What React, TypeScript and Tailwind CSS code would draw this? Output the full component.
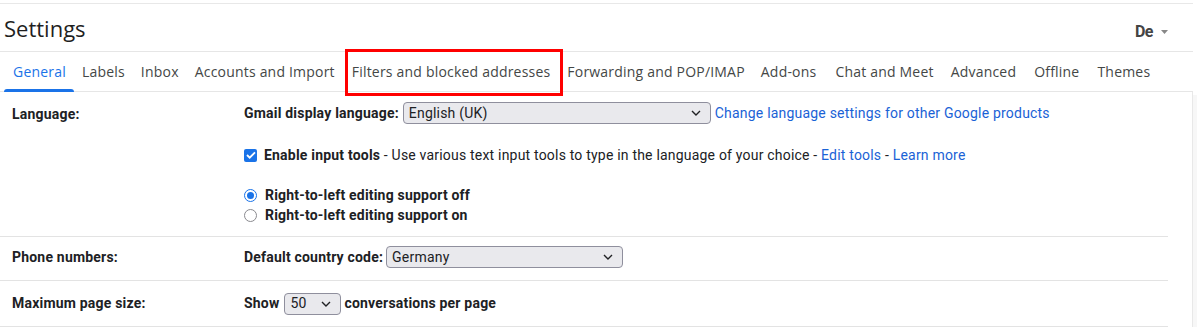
import React from "react";

const tabs: { t: string; m: string }[] = [
  { t: "General", m: "" },
  { t: "Labels", m: "" },
  { t: "Inbox", m: "" },
  { t: "Accounts and Import", m: "mr-[1px]" },
  { t: "Filters and blocked addresses", m: "mr-[1px]" },
  { t: "Forwarding and POP/IMAP", m: "" },
  { t: "Add-ons", m: "mr-[3px]" },
  { t: "Chat and Meet", m: "mr-[1px]" },
  { t: "Advanced", m: "mr-[2px]" },
  { t: "Offline", m: "mr-[2px]" },
  { t: "Themes", m: "" },
];

function Chevron() {
  return (
    <svg width="10" height="6" viewBox="0 0 10 6" className="shrink-0">
      <path d="M1 1l4 4 4-4" fill="none" stroke="#202124" strokeWidth="1.4" />
    </svg>
  );
}

function Select({ value, width }: { value: string; width: string }) {
  return (
    <div
      className={`${width} h-[22px] flex items-center justify-between pl-[5px] pr-[9px] bg-[#e9e9ed] border border-[#8f8f9d] rounded-[4px] text-[14px] font-normal text-[#202124]`}
    >
      <span>{value}</span>
      <Chevron />
    </div>
  );
}

export default function App() {
  return (
    <div
      className="w-[1197px] h-[333px] bg-white overflow-hidden text-[#202124]"
      style={{ fontFamily: "Roboto, 'Liberation Sans', sans-serif" }}
    >
      <div className="h-[3px]" />
      <div className="flex">
        <div className="w-[1193px]">
          <div className="border-t border-[#e8e8e8] h-[48px] flex items-center justify-between pl-[4px] pr-[25px]">
            <span
              className="text-[22px] text-[#1f1f1f] pt-[2px]"
              style={{ fontFamily: "'Open Sans', Roboto, sans-serif" }}
            >
              Settings
            </span>
            <span className="flex items-center gap-[8px] text-[16px] font-bold text-[#444] pt-[8px]">
              <span className="tracking-[-0.5px]">De</span>
              <svg width="7" height="4" viewBox="0 0 7 4">
                <path d="M0 0h7L3.5 4z" fill="#888" />
              </svg>
            </span>
          </div>
          <div className="border-t border-b border-[#e6e6e6] h-[41px] flex items-stretch pl-[5px]">
            {tabs.map(({ t, m }, i) => (
              <div
                key={t}
                className={`relative px-[8px] flex items-center text-[14px] ${m} ${
                  i === 0 ? "text-[#1a73e8]" : "text-[#444746]"
                }`}
                style={{ fontFamily: "'Open Sans', Roboto, sans-serif", letterSpacing: "0.2px" }}
              >
                {t}
                {i === 0 && (
                  <div className="absolute left-[-1px] right-0 bottom-[-1px] h-[3px] bg-[#1a73e8] rounded-t-[3px]" />
                )}
                {i === 4 && (
                  <div className="absolute left-[1px] right-[-5px] top-[-3px] bottom-[-5px] border-[3px] border-[#ff0000]" />
                )}
              </div>
            ))}
          </div>
          <div
            className="border-r border-[#e8e8e8] pr-[24px] text-[14px]"
            style={{ letterSpacing: "0.2px" }}
          >
            <div className="flex border-b border-[#e3e3e3] pt-[10px] pb-[11px]">
              <div className="w-[244px] pl-[12px] font-bold pt-[2px]">Language:</div>
              <div className="flex flex-col">
                <div className="flex items-center h-[22px]">
                  <span className="font-bold mr-[4px]">Gmail display language:</span>
                  <Select value="English (UK)" width="w-[308px]" />
                  <span className="ml-[4px] text-[#1a62d6]">
                    Change language settings for other Google products
                  </span>
                </div>
                <div className="flex items-center mt-[20px] h-[22px]">
                  <div className="w-[13px] h-[13px] rounded-[2px] bg-[#1a73e8] flex items-center justify-center mr-[7px]">
                    <svg width="10" height="8" viewBox="0 0 10 8">
                      <path d="M1 4l2.7 2.7L9 1.3" fill="none" stroke="white" strokeWidth="1.8" />
                    </svg>
                  </div>
                  <span className="font-bold">Enable input tools</span>
                  <span className="whitespace-pre">
                    {" - Use various text input tools to type in the language of your choice - "}
                  </span>
                  <span className="text-[#1a62d6]">Edit tools</span>
                  <span className="whitespace-pre">{" - "}</span>
                  <span className="text-[#1a62d6]">Learn more</span>
                </div>
                <div className="flex items-center mt-[19px] h-[20px]">
                  <div className="w-[13px] h-[13px] rounded-full border-[1.5px] border-[#1a73e8] flex items-center justify-center mr-[8px]">
                    <div className="w-[7px] h-[7px] rounded-full bg-[#1a73e8]" />
                  </div>
                  <span className="font-bold">Right-to-left editing support off</span>
                </div>
                <div className="flex items-center h-[20px]">
                  <div className="w-[13px] h-[13px] rounded-full border-[1.5px] border-[#8a8a8f] mr-[8px]" />
                  <span className="font-bold">Right-to-left editing support on</span>
                </div>
              </div>
            </div>
            <div className="flex items-center border-b border-[#e3e3e3] h-[44px] pb-[3px]">
              <div className="w-[244px] pl-[12px] font-bold">Phone numbers:</div>
              <span className="font-bold mr-[3px]">Default country code:</span>
              <Select value="Germany" width="w-[237px]" />
            </div>
            <div className="flex items-center border-b border-[#e3e3e3] h-[46px]">
              <div className="w-[244px] pl-[12px] font-bold">Maximum page size:</div>
              <span className="font-bold mr-[5px]">Show</span>
              <Select value="50" width="w-[57px]" />
              <span className="font-bold ml-[3px]">conversations per page</span>
            </div>
          </div>
        </div>
        <div className="flex-1 bg-[#f7f7f7] mt-[92px]" />
      </div>
    </div>
  );
}
